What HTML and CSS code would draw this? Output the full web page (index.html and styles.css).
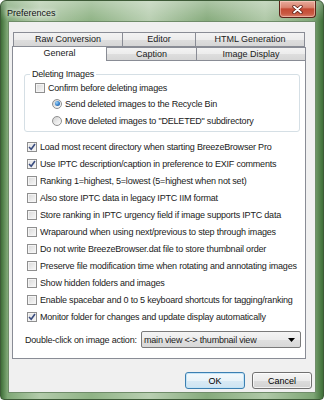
FILE: index.html
```html
<!DOCTYPE html>
<html lang="en">
<head>
    <meta charset="UTF-8">
    <title>Preferences</title>
    <link rel="stylesheet" href="styles.css">
</head>
<body>

    <div class="window">
        <div class="titlebar">
            <span class="title">Preferences</span>
            <span class="close">
                <svg width="11" height="9" viewBox="0 0 11 9">
                    <path d="M2 1.5 L9 7.5 M9 1.5 L2 7.5" stroke="#5a1c12" stroke-width="3.4" stroke-linecap="round"/>
                    <path d="M2 1.5 L9 7.5 M9 1.5 L2 7.5" stroke="#fff" stroke-width="1.8" stroke-linecap="round"/>
                </svg>
            </span>
        </div>

        <div class="client">
            <!-- Tabs -->
            <div class="tab-row back">
                <div class="tab w-raw">Raw Conversion</div>
                <div class="tab w-editor">Editor</div>
                <div class="tab w-html">HTML Generation</div>
            </div>
            <div class="tab-row front">
                <div class="tab active w-general">General</div>
                <div class="tab w-caption">Caption</div>
                <div class="tab w-display">Image Display</div>
            </div>

            <div class="pane">
                <fieldset class="group">
                    <legend>Deleting Images</legend>
                    <div class="row confirm"><span class="box"></span>Confirm before deleting images</div>
                    <div class="row radio-row send"><span class="radio on"></span>Send deleted images to the Recycle Bin</div>
                    <div class="row radio-row move"><span class="radio"></span>Move deleted images to "DELETED" subdirectory</div>
                </fieldset>

                <div class="options">
                    <div class="row"><span class="box checked"><svg width="8" height="8" viewBox="0 0 8 8"><path d="M1 4 L3.2 6.3 L7 1" fill="none" stroke="#3a4d80" stroke-width="1.6"/></svg></span>Load most recent directory when starting BreezeBrowser Pro</div>
                    <div class="row"><span class="box checked"><svg width="8" height="8" viewBox="0 0 8 8"><path d="M1 4 L3.2 6.3 L7 1" fill="none" stroke="#3a4d80" stroke-width="1.6"/></svg></span>Use IPTC description/caption in preference to EXIF comments</div>
                    <div class="row"><span class="box"></span>Ranking 1=highest, 5=lowest (5=highest when not set)</div>
                    <div class="row"><span class="box"></span>Also store IPTC data in legacy IPTC IIM format</div>
                    <div class="row"><span class="box"></span>Store ranking in IPTC urgency field if image supports IPTC data</div>
                    <div class="row"><span class="box"></span>Wraparound when using next/previous to step through images</div>
                    <div class="row"><span class="box"></span>Do not write BreezeBrowser.dat file to store thumbnail order</div>
                    <div class="row"><span class="box"></span>Preserve file modification time when rotating and annotating images</div>
                    <div class="row"><span class="box"></span>Show hidden folders and images</div>
                    <div class="row"><span class="box"></span>Enable spacebar and 0 to 5 keyboard shortcuts for tagging/ranking</div>
                    <div class="row"><span class="box checked"><svg width="8" height="8" viewBox="0 0 8 8"><path d="M1 4 L3.2 6.3 L7 1" fill="none" stroke="#3a4d80" stroke-width="1.6"/></svg></span>Monitor folder for changes and update display automatically</div>
                </div>

                <div class="action-row">
                    <span class="action-label">Double-click on image action:</span>
                    <div class="combo">
                        <span>main view &lt;-&gt; thumbnail view</span>
                        <svg width="7" height="4" viewBox="0 0 7 4"><path d="M0 0 L7 0 L3.5 4 Z" fill="#000"/></svg>
                    </div>
                </div>
            </div>

            <div class="buttons">
                <button class="btn default">OK</button>
                <button class="btn">Cancel</button>
            </div>
        </div>
    </div>

</body>
</html>
```

FILE: styles.css
```css
* {
    box-sizing: border-box;
}

body {
    margin: 0;
    width: 324px;
    height: 400px;
    overflow: hidden;
    background: #fff;
    font-family: 'Liberation Sans', Arial, sans-serif;
    font-size: 9px;
    color: #1a1a1a;
}

.window {
    height: 400px;
    display: flex;
    flex-direction: column;
    padding: 0 7px 6px 7px;
    border: 1px solid #3d5a37;
    border-radius: 6px 6px 4px 4px;
    background:
        linear-gradient(180deg, rgba(255, 255, 255, 0.3), rgba(255, 255, 255, 0) 20px),
        linear-gradient(90deg, #3f6f38 0, #7fa876 2%, #b3cbab 12%, #8fb385 28%, #b9cfb2 46%, #86ab7c 64%, #afc8a7 82%, #7ea675 97%, #3f6f38 100%);
}

.titlebar {
    height: 20px;
    display: flex;
    justify-content: space-between;
    align-items: flex-start;
}

.title {
    margin: 7px 0 0 -1px;
    line-height: 11px;
    color: #111;
    text-shadow: 0 0 4px #fff, 0 0 6px #fff;
}

.close {
    width: 37px;
    height: 17px;
    display: flex;
    align-items: center;
    justify-content: center;
    border: 1px solid #5b2319;
    border-top: none;
    border-radius: 0 0 4px 4px;
    background: linear-gradient(180deg, #e8ab9c 0, #d98470 40%, #c44a33 50%, #c95a43 80%, #d9826d 100%);
    box-shadow: inset 0 0 0 1px rgba(255, 220, 210, 0.5);
}

.client {
    flex: 1;
    background: #f0f0f0;
    border: 1px solid #6f8c69;
    padding: 10px 3px 0 3px;
}

/* Tabs */
.tab-row {
    display: flex;
    align-items: flex-end;
}

.tab-row.back {
    padding-left: 1px;
}

.tab-row.front {
    margin-top: -1px;
}

.tab {
    height: 15px;
    line-height: 13px;
    text-align: center;
    border: 1px solid #898c95;
    background: linear-gradient(180deg, #f3f3f3 0, #ececec 50%, #dedede 50%, #d6d6d6 100%);
    white-space: nowrap;
}

.tab + .tab {
    margin-left: -1px;
}

.front .tab {
    height: 13px;
    line-height: 12px;
    border-bottom: none;
}

.front .tab.active {
    position: relative;
    z-index: 1;
    height: 15px;
    margin-bottom: -1px;
    background: #fff;
}

.w-raw { width: 110px; }
.w-editor { width: 74px; }
.w-html { width: 110px; }
.w-general { width: 95px; }
.w-caption { width: 91px; }
.w-display { width: 110px; }

.pane {
    width: 294px;
    height: 299px;
    background: #fff;
    border: 1px solid #898c95;
    padding: 7px 5px 0 11px;
    letter-spacing: -0.2px;
}

/* Group box */
.group {
    margin: 0;
    min-width: 0;
    padding: 0 0 2px 5px;
    border: 1px solid #d5dfe5;
    border-radius: 3px;
}

.group legend {
    padding: 0 2px;
    line-height: 12px;
}

.row {
    display: flex;
    align-items: center;
    height: 17px;
    white-space: nowrap;
}

.group .row {
    height: 16px;
}

.group .confirm {
    margin-left: 5px;
}

.group .radio-row {
    margin-left: 22px;
}

.group .send {
    height: 15px;
}

.group .move {
    margin-top: 2px;
}

.box {
    width: 10px;
    height: 10px;
    margin-right: 3px;
    flex-shrink: 0;
    display: flex;
    align-items: center;
    justify-content: center;
    border: 1px solid #8f8f8f;
    background: linear-gradient(135deg, #d8d8d8 0, #ececec 60%, #f8f8f8 100%);
    box-shadow: inset 0 0 0 1px #f4f4f4;
}

.box.checked {
    background: linear-gradient(135deg, #e2e2e2 0, #f4f4f4 100%);
}

.radio {
    width: 10px;
    height: 10px;
    margin-right: 3px;
    flex-shrink: 0;
    display: flex;
    align-items: center;
    justify-content: center;
    border: 1px solid #8f8f8f;
    border-radius: 50%;
    background: linear-gradient(135deg, #d0d0d0 0, #ededed 60%, #fafafa 100%);
}

.radio.on::after {
    content: "";
    width: 5px;
    height: 5px;
    border-radius: 50%;
    background: radial-gradient(circle at 35% 35%, #9fd4f8 0, #3b86cf 50%, #1d4f93 100%);
}

.options {
    margin-top: 6px;
    padding-left: 3px;
}

.action-row {
    display: flex;
    align-items: center;
    justify-content: space-between;
    margin: 6px -1px 0 1px;
    height: 17px;
}

.action-label {
    white-space: nowrap;
}

.combo {
    width: 160px;
    height: 17px;
    display: flex;
    align-items: center;
    justify-content: space-between;
    padding: 0 5px 0 2px;
    border: 1px solid #7a7a7a;
    border-radius: 2px;
    background: linear-gradient(180deg, #f4f4f4 0, #ececec 50%, #e0e0e0 50%, #d8d8d8 100%);
    white-space: nowrap;
}

/* Dialog buttons */
.buttons {
    display: flex;
    justify-content: flex-end;
    gap: 7px;
    margin-top: 13px;
}

.btn {
    width: 60px;
    height: 17px;
    padding: 0;
    font-family: inherit;
    font-size: 9px;
    color: #000;
    border: 1px solid #707070;
    border-radius: 3px;
    background: linear-gradient(180deg, #f4f4f4 0, #ebebeb 50%, #dddddd 50%, #d2d2d2 100%);
    box-shadow: inset 0 0 0 1px rgba(255, 255, 255, 0.7);
}

.btn.default {
    border-color: #3c7fb1;
    background: linear-gradient(180deg, #f4f9fc 0, #e9f3f9 50%, #d9eaf5 50%, #cfe4f2 100%);
    box-shadow: inset 0 0 0 1px #c3e4f7;
}
```
